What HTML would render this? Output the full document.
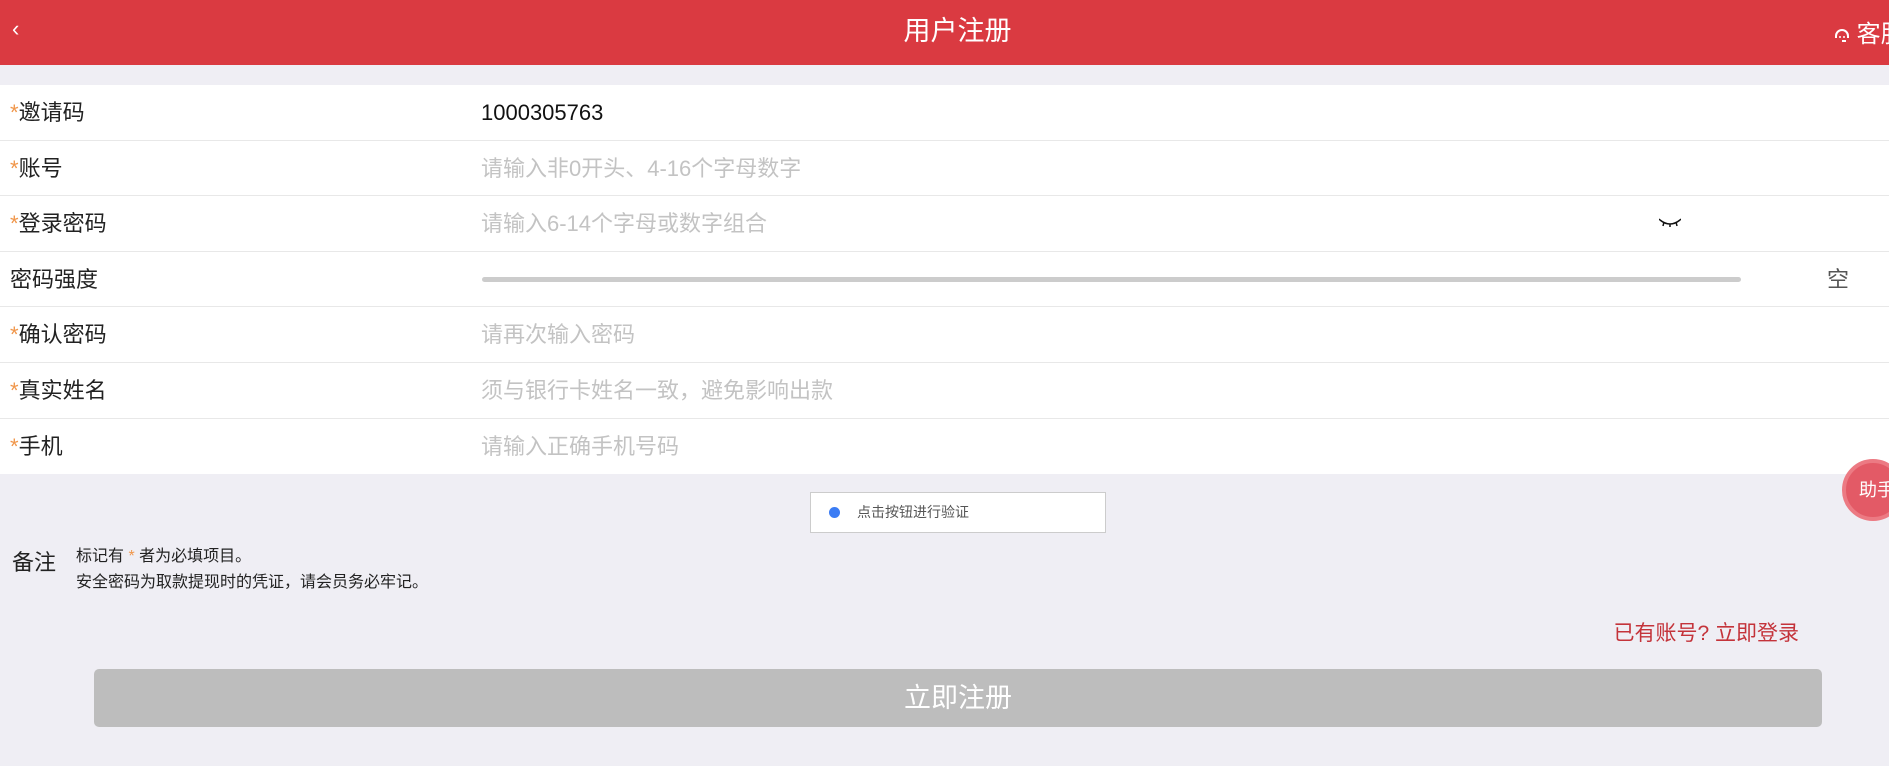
<!DOCTYPE html>
<html><head><meta charset="utf-8"><style>
*{margin:0;padding:0;box-sizing:border-box}
body{width:1889px;height:766px;background:#efeef4;font-family:"Liberation Sans","Noto Sans CJK SC",sans-serif;position:relative;overflow:hidden}
.hd{position:absolute;left:0;top:0;width:1889px;height:65px;background:#da3a41;color:#fff}
.hd .t{position:absolute;left:26px;right:0;top:0;line-height:62px;text-align:center;font-size:27px}
.hd .b{position:absolute;left:12px;top:16px;font-size:22px}
.hd .k{position:absolute;left:1834px;top:14px;font-size:24px;white-space:nowrap}
.form{position:absolute;left:0;top:85px;width:1889px;background:#fff}
.row{height:55.6px;border-bottom:1px solid #e8e8e8;position:relative;font-size:22px}
.row:last-child{border-bottom:none}
.l{position:absolute;left:10px;top:0;line-height:55px;color:#222}
.l i{color:#f0964a;font-style:normal}
.v{position:absolute;left:481px;top:0;line-height:55px;color:#c3c3c3}
.v.d{color:#111}
.bar{position:absolute;left:482px;top:25px;width:1259px;height:5px;border-radius:3px;background:#ccc}
.e{position:absolute;left:1827px;top:0;line-height:55px;color:#555}
.cap{position:absolute;left:810px;top:492px;width:296px;height:41px;background:#fff;border:1px solid #ccc;font-size:14px;color:#555;line-height:39px;padding-left:46px}
.cap:before{content:"";position:absolute;left:18px;top:14px;width:11px;height:11px;border-radius:50%;background:#3b7cf4}
.bz{position:absolute;left:12px;top:545px;font-size:22px;color:#222}
.nt{position:absolute;left:76px;top:544px;font-size:16px;color:#222;line-height:26px}
.nt i{color:#f0964a;font-style:normal}
.lg{position:absolute;right:90px;top:617px;font-size:21px;color:#c4333a}
.btn{position:absolute;left:94px;top:669px;width:1728px;height:58px;border-radius:5px;background:#bdbdbd;color:#fff;font-size:27px;text-align:center;line-height:58px}
.zs{position:absolute;left:1842px;top:459px;width:62px;height:62px;border-radius:50%;background:#e35a66;border:4px solid #ec7a83;color:#fff;font-size:18px;line-height:54px;padding-left:13px;white-space:nowrap}
</style></head><body>
<div class="hd"><span class="b">&#8249;</span><div class="t">用户注册</div><span class="k"><svg width="16" height="16" viewBox="0 0 16 16" style="vertical-align:-1px"><path d="M2 9a6 6 0 0 1 12 0M2 9v2M14 9v2M8 14h4" stroke="#fff" stroke-width="2" fill="none"/><circle cx="6" cy="10" r="1" fill="#fff"/><circle cx="10" cy="10" r="1" fill="#fff"/></svg> 客服</span></div>
<div class="form">
<div class="row"><span class="l"><i>*</i>邀请码</span><span class="v d">1000305763</span></div>
<div class="row"><span class="l"><i>*</i>账号</span><span class="v">请输入非0开头、4-16个字母数字</span></div>
<div class="row"><span class="l"><i>*</i>登录密码</span><span class="v">请输入6-14个字母或数字组合</span><svg style="position:absolute;left:1659px;top:22px" width="22" height="10" viewBox="0 0 22 10"><path d="M1 2q10 8 20 0M5 4l-1 4M11 6v3M17 4l1 4M1 2l-1-1M21 2l1-1" stroke="#111" stroke-width="1.5" fill="none"/></svg></div>
<div class="row"><span class="l">密码强度</span><div class="bar"></div><span class="e">空</span></div>
<div class="row"><span class="l"><i>*</i>确认密码</span><span class="v">请再次输入密码</span></div>
<div class="row"><span class="l"><i>*</i>真实姓名</span><span class="v">须与银行卡姓名一致，避免影响出款</span></div>
<div class="row"><span class="l"><i>*</i>手机</span><span class="v">请输入正确手机号码</span></div>
</div>
<div class="cap">点击按钮进行验证</div>
<div class="bz">备注</div>
<div class="nt">标记有 <i>*</i> 者为必填项目。<br>安全密码为取款提现时的凭证，请会员务必牢记。</div>
<div class="lg">已有账号? 立即登录</div>
<div class="btn">立即注册</div>
<div class="zs">助手</div>
</body></html>
